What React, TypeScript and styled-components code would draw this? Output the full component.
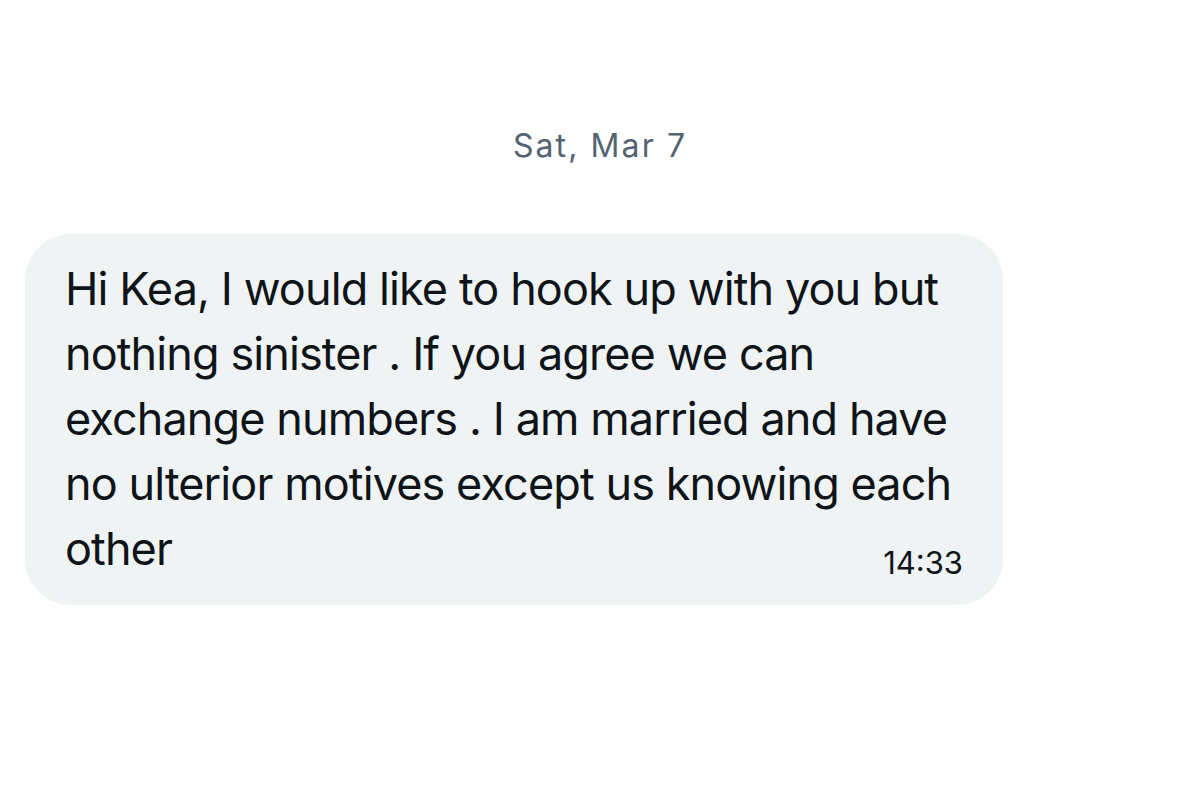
import React from "react";
import styled, { createGlobalStyle } from "styled-components";

const Global = createGlobalStyle`
  html, body { margin: 0; padding: 0; background: #ffffff; }
  body { font-family: Inter, "Noto Sans", Roboto, sans-serif; -webkit-font-smoothing: antialiased; }
`;

const Page = styled.div`
  width: 1200px;
  height: 786px;
  background: #ffffff;
  display: flex;
  flex-direction: column;
  padding-top: 126px;
  box-sizing: border-box;
  overflow: hidden;
`;

const DateLabel = styled.div`
  align-self: center;
  font-size: 32px;
  line-height: 40px;
  letter-spacing: 2.1px;
  color: #536471;
  margin-bottom: 68px;
`;

const Bubble = styled.div`
  margin-left: 25px;
  width: 978px;
  box-sizing: border-box;
  background: #eff3f4;
  border-radius: 46px;
  padding: 22px 40px 22px 40px;
  display: flex;
  flex-direction: column;
`;

const Message = styled.div`
  font-size: 45px;
  line-height: 65px;
  letter-spacing: -0.9px;
  white-space: nowrap;
  color: #0f1419;
`;

const Time = styled.div`
  align-self: flex-end;
  font-size: 31px;
  line-height: 40px;
  color: #0f1419;
  margin-top: -38px;
`;

export default function App() {
  return (
    <>
      <Global />
      <Page>
        <DateLabel>Sat, Mar 7</DateLabel>
        <Bubble>
          <Message>
            Hi Kea, I would like to hook up with you but
            <br />
            nothing sinister . If you agree we can
            <br />
            exchange numbers . I am married and have
            <br />
            no ulterior motives except us knowing each
            <br />
            other
          </Message>
          <Time>14:33</Time>
        </Bubble>
      </Page>
    </>
  );
}
